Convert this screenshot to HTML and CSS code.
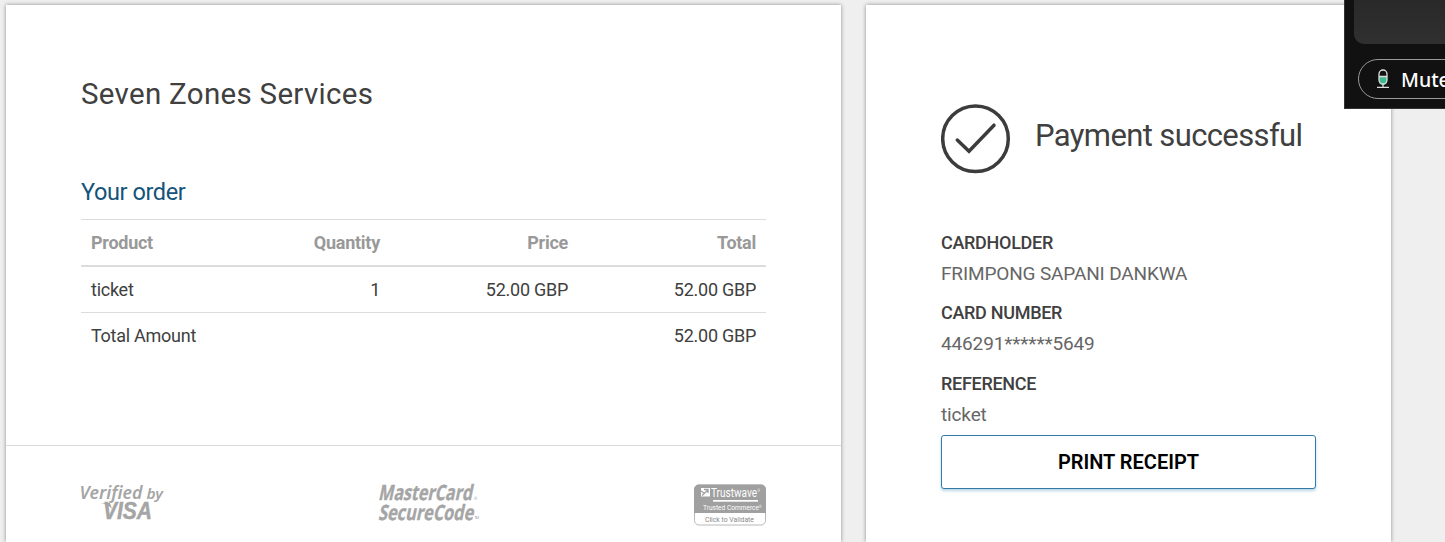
FILE: index.html
```html
<!DOCTYPE html>
<html lang="en">
<head>
<meta charset="utf-8">
<title>Payment successful</title>
<link rel="stylesheet" href="styles.css">
</head>
<body>
<main class="page">
  <section class="card order">
    <div class="order-body">
      <h1 class="merchant">Seven Zones Services</h1>
      <h2 class="order-title">Your order</h2>
      <table class="items">
        <colgroup><col class="c1"><col class="c2"><col class="c3"><col class="c4"></colgroup>
        <thead><tr><th>Product</th><th>Quantity</th><th>Price</th><th>Total</th></tr></thead>
        <tbody>
          <tr><td>ticket</td><td>1</td><td>52.00 GBP</td><td>52.00 GBP</td></tr>
          <tr><td>Total Amount</td><td></td><td></td><td>52.00 GBP</td></tr>
        </tbody>
      </table>
    </div>
    <footer class="logos">
      <svg class="logo-visa" width="84" height="42" viewBox="0 0 84 42" fill="#a5a5a5">
        <g font-family="Noto Sans, sans-serif" font-style="italic" font-weight="600">
          <text x="-1.500" y="15" font-size="18.500" textLength="63" lengthAdjust="spacingAndGlyphs">Verified</text>
          <text x="65.500" y="15" font-size="14" textLength="16.500" lengthAdjust="spacingAndGlyphs">by</text>
        </g>
        <text x="22" y="35" font-size="23" font-weight="700" font-style="italic" font-family="Liberation Sans, sans-serif" textLength="49" lengthAdjust="spacingAndGlyphs" stroke="#a5a5a5" stroke-width=".5">VISA</text>
        <path d="M20 19h9l2 6q-4-5-11-6z"/>
      </svg>
      <svg class="logo-mc" width="103" height="42" viewBox="0 0 103 42" fill="#a5a5a5">
        <g font-family="Open Sans, sans-serif" font-weight="700" stroke="#a5a5a5" stroke-width=".4">
          <text transform="translate(0 16) skewX(-12)" font-size="21" textLength="94" lengthAdjust="spacingAndGlyphs">MasterCard</text>
          <text transform="translate(0 36) skewX(-12)" font-size="21" textLength="95" lengthAdjust="spacingAndGlyphs">SecureCode</text>
        </g>
        <text x="96" y="16" font-size="4" font-family="Roboto, sans-serif">®</text>
        <text x="96.500" y="35" font-size="4" font-family="Roboto, sans-serif" textLength="4.500">TM</text>
      </svg>
      <svg class="logo-tw" width="72" height="42" viewBox="0 0 72 42">
        <rect x=".5" y="1" width="71" height="40" rx="4.500" fill="#fff" stroke="#b8b8b8"/>
        <path d="M0 29V5.500a5 5 0 0 1 5-5h62a5 5 0 0 1 5 5V29z" fill="#a0a0a0"/>
        <path d="M7 4h9v8.500H7z" fill="#fff"/>
        <path d="M8 11.500l5.500-5M10 5.500h4v3.500M7 7l3 2" fill="none" stroke="#a0a0a0" stroke-width="1.300"/>
        <g fill="#fff" font-family="Roboto, sans-serif">
          <text x="17" y="12.500" font-size="12" textLength="46" lengthAdjust="spacingAndGlyphs">Trustwave</text>
          <text x="63.500" y="8" font-size="3">®</text>
          <rect x="19" y="16" width="45" height="1.700"/>
          <text x="9" y="25.500" font-size="7" textLength="56" lengthAdjust="spacingAndGlyphs">Trusted Commerce</text>
          <text x="65" y="23.500" font-size="3">®</text>
        </g>
        <text x="11" y="38.300" font-size="7.300" fill="#888" font-family="Roboto, sans-serif" textLength="49" lengthAdjust="spacingAndGlyphs">Click to Validate</text>
      </svg>
    </footer>
  </section>
  <section class="card receipt">
    <div class="status">
      <svg class="check" width="70" height="70" viewBox="0 0 70 70" fill="none" stroke="#3c3c3c">
        <circle cx="34.500" cy="34.800" r="32.800" stroke-width="3.500"/>
        <path d="M16.300 36l11.700 11.200L53 21.200" stroke-width="3.500" stroke-linecap="round"/>
      </svg>
      <h2 class="status-text">Payment successful</h2>
    </div>
    <dl class="details">
      <dt>CARDHOLDER</dt><dd>FRIMPONG SAPANI DANKWA</dd>
      <dt>CARD NUMBER</dt><dd>446291******5649</dd>
      <dt>REFERENCE</dt><dd>ticket</dd>
    </dl>
    <button class="print" type="button">PRINT RECEIPT</button>
  </section>
</main>
<aside class="call">
  <div class="call-video"></div>
  <div class="mute">
    <svg width="16" height="22" viewBox="0 0 16 22" fill="none">
      <path d="M4 9h8v4a4 4 0 0 1-8 0z" fill="#3fb98e"/>
      <rect x="4" y="2" width="8" height="14" rx="4" stroke="#ddd" stroke-width="1.300"/>
      <path d="M4 8.500h8M8 16v3M2 19.300h12" stroke="#ddd" stroke-width="1.300"/>
    </svg>
    <span>Mute</span>
  </div>
</aside>
</body>
</html>
```
FILE: styles.css
```css
* { box-sizing: border-box; }
body {
  margin: 0;
  height: 542px;
  overflow: hidden;
  background: #efefef;
  font-family: Roboto, sans-serif;
  color: #404040;
}
.page { display: flex; gap: 25px; height: 542px; padding: 5px 0 0 6px; }
.card { background: #fff; box-shadow: 0 0 4px rgba(0, 0, 0, .42); }
.order { width: 835px; flex: none; }
.order-body { height: 441px; padding: 68px 75px 0; border-bottom: 1px solid #dcdcdc; }
h1, h2 { margin: 0; font-weight: 400; white-space: nowrap; }
.merchant { padding-top: 1px; font-size: 29.500px; line-height: 40px; letter-spacing: .3px; }
.order-title { margin-top: 63px; font-size: 23.500px; line-height: 30px; letter-spacing: -.4px; color: #13547a; }
.items {
  width: 685px;
  margin-top: 12px;
  border-collapse: separate;
  border-spacing: 0;
  table-layout: fixed;
  border-top: 1px solid #dcdcdc;
  font-size: 18px;
  letter-spacing: -.26px;
}
.c1 { width: 121px; }
.c2, .c3, .c4 { width: 188px; }
.items th, .items td { height: 46px; padding: 0 10px; text-align: right; white-space: nowrap; line-height: 24px; }
.items th { height: 47px; color: #999; border-bottom: 2px solid #dcdcdc; }
.items th:first-child, .items td:first-child { text-align: left; }
.items tbody tr:first-child td { border-bottom: 1px solid #dcdcdc; }
.logos { display: flex; justify-content: space-between; padding: 38px 75px 0; }
.logos svg { display: block; overflow: visible; }
.receipt { width: 525px; flex: none; padding: 99px 75px 0; }
.status { display: flex; gap: 24px; height: 70px; }
.check { flex: none; }
.status-text { margin-top: 12px; font-size: 31px; line-height: 40px; letter-spacing: -.62px; }
.details { margin: 53px 0 0; font-size: 18px; line-height: 31px; }
.details dt { font-weight: 500; height: 31px; letter-spacing: -.3px; }
.details dd { margin: 0 0 8px; color: #666; font-size: 19px; height: 31px; letter-spacing: -.14px; }
.details dd:nth-of-type(2) { margin-bottom: 9px; }
.details dd:last-child { margin-bottom: 0; }
.print {
  display: block;
  width: 375px;
  height: 54px;
  margin-top: 5px;
  padding: 0;
  border: 1px solid #337ba6;
  border-radius: 3px;
  background: #fff;
  box-shadow: 0 2px 3px rgba(51, 140, 190, .35);
  font: 600 20px/24px Roboto, sans-serif;
  color: #000;
}
.call {
  position: absolute;
  top: 0;
  right: 0;
  width: 101px;
  height: 109px;
  overflow: hidden;
  padding-left: 9px;
  background: #111;
  border: solid #333;
  border-width: 0 0 1px 1px;
}
.call-video { height: 44px; border-radius: 0 0 0 10px; background: linear-gradient(#292929, #303030); }
.mute {
  display: flex;
  align-items: center;
  gap: 10px;
  width: 160px;
  height: 40px;
  margin: 15px 0 0 4px;
  padding-left: 16px;
  border: 1px solid #999;
  border-radius: 20px;
  font: 500 19.500px/26px "Noto Sans", sans-serif;
  color: #fff;
}
.mute span { padding-top: 2px; }
```
